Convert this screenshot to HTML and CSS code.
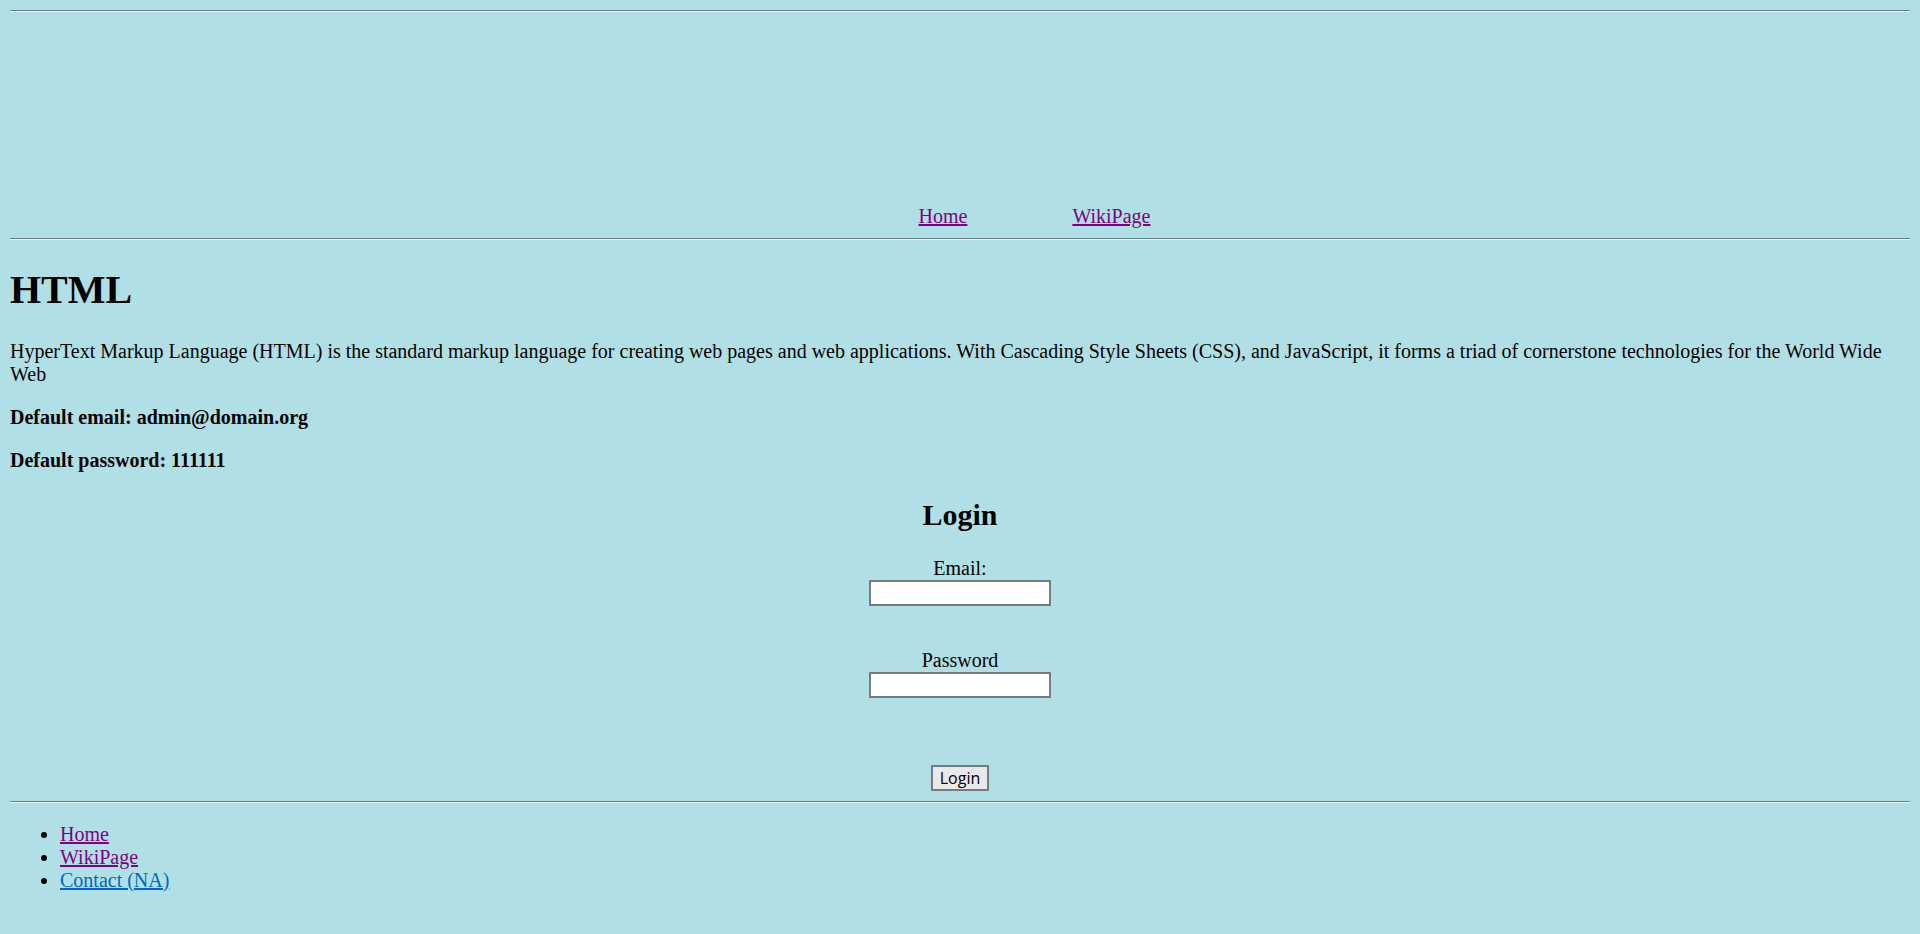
FILE: index.html
```html
<!DOCTYPE html>
<html lang="en">
<head>
<meta charset="utf-8">
<title>HTML</title>
<link rel="stylesheet" href="styles.css">
</head>
<body>
<hr class="rule rule-top">
<header class="masthead"></header>
<nav class="topnav">
  <a class="link visited" href="#">Home</a>
  <a class="link visited" href="#">WikiPage</a>
</nav>
<hr class="rule">
<main class="content">
  <h1 class="title">HTML</h1>
  <p class="para">HyperText Markup Language (HTML) is the standard markup language for creating web pages and web applications. With Cascading Style Sheets (CSS), and JavaScript, it forms a triad of cornerstone technologies for the World Wide Web</p>
  <p class="para"><strong>Default email: admin@domain.org</strong></p>
  <p class="para"><strong>Default password: 111111</strong></p>
  <form class="login">
    <h2 class="login-title">Login</h2>
    <label class="field-label" for="email">Email:</label>
    <input class="field" id="email" type="text">
    <label class="field-label field-label-gap" for="password">Password</label>
    <input class="field" id="password" type="password">
    <button class="btn" type="button">Login</button>
  </form>
</main>
<hr class="rule">
<ul class="footer-list">
  <li><a class="link visited" href="#">Home</a></li>
  <li><a class="link visited" href="#">WikiPage</a></li>
  <li><a class="link" href="#">Contact (NA)</a></li>
</ul>
</body>
</html>
```

FILE: styles.css
```css
html {
  background: #b0e0e6;
}
body {
  margin: 10px;
  font-family: "Liberation Serif", "Times New Roman", serif;
  font-size: 20px;
  line-height: 23px;
  color: #000;
}
.rule {
  margin: 10px 0;
  height: 0;
  border-style: solid;
  border-width: 1px 0 1px 0;
  border-top-color: #6a7d80;
  border-bottom-color: #e8f4f6;
}
.rule-top {
  margin-top: 0;
}
.masthead {
  height: 183px;
}
.topnav {
  display: flex;
  justify-content: center;
  gap: 105px;
  padding-left: 149px;
  line-height: 23px;
}
.link {
  color: #0066cc;
  text-decoration: underline;
}
.link.visited {
  color: #800080;
}
.title {
  font-size: 40px;
  line-height: 46px;
  font-weight: bold;
  margin: 27px 0;
}
.para {
  margin: 20px 0;
}
.login {
  display: block;
  text-align: center;
}
.login-title {
  font-size: 30px;
  line-height: 35px;
  font-weight: bold;
  margin: 25px 0;
}
.field-label {
  display: block;
  line-height: 23px;
}
.field-label-gap {
  margin-top: 43px;
}
.field {
  display: block;
  box-sizing: border-box;
  width: 182px;
  height: 26px;
  margin: 0 auto;
  border: 2px solid #737d7f;
  background: #fff;
  font-size: 16px;
}
.btn {
  display: block;
  box-sizing: border-box;
  margin: 67px auto 0;
  height: 26px;
  padding: 0 7px;
  border: 2px solid #737d7f;
  background: #e9e9e9;
  font-family: "Open Sans", "Liberation Sans", sans-serif;
  font-size: 16px;
  line-height: 20px;
  color: #000;
}
.footer-list {
  margin: 20px 0;
  padding-left: 50px;
}
```
